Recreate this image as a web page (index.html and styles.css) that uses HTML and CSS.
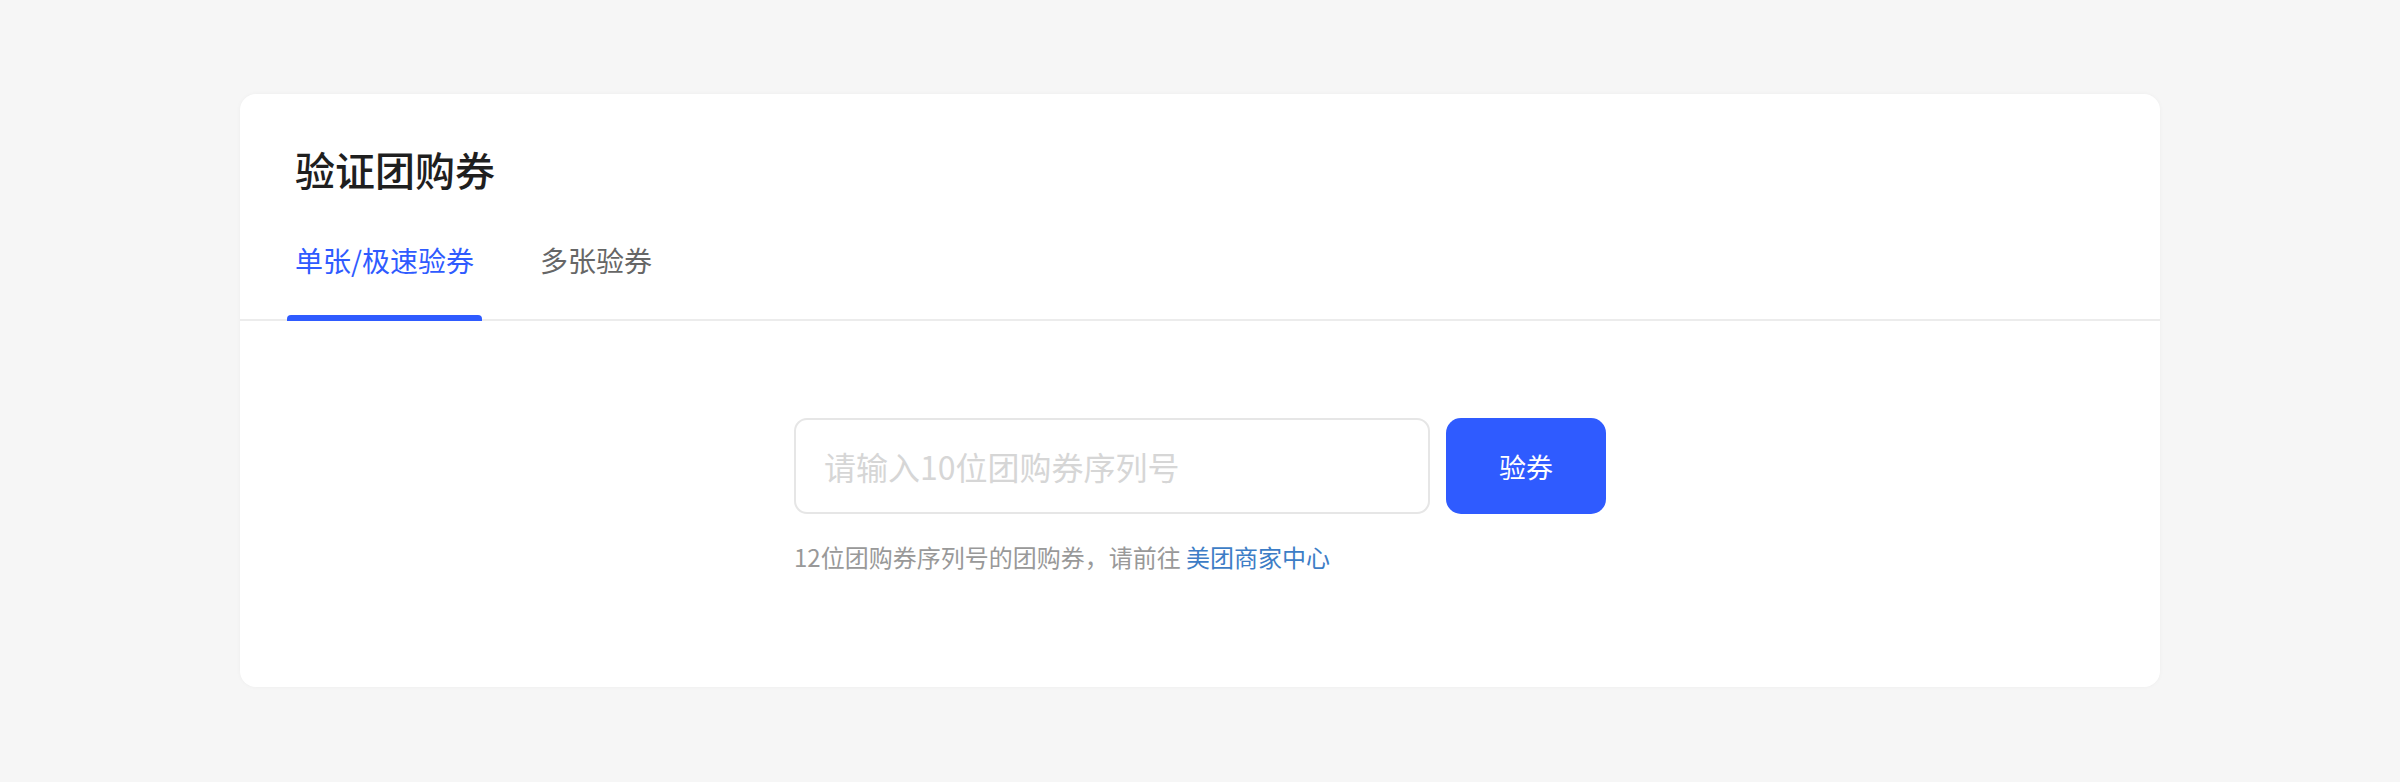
FILE: index.html
```html
<!DOCTYPE html>
<html lang="zh-CN">

<head>
    <meta charset="UTF-8">
    <meta name="viewport" content="width=device-width, initial-scale=1.0">
    <title>验证团购券</title>
    <link rel="stylesheet" href="styles.css">
</head>

<body>
    <div class="card">
        <div class="card-head">
            <h1 class="title">验证团购券</h1>
            <div class="tabs">
                <div class="tab active">单张/极速验券</div>
                <div class="tab">多张验券</div>
            </div>
        </div>
        <div class="card-body">
            <div class="verify">
                <div class="verify-row">
                    <input type="text" class="code-input" placeholder="请输入10位团购券序列号">
                    <button class="verify-btn">验券</button>
                </div>
                <p class="tip">12位团购券序列号的团购券，请前往 <a href="#" class="tip-link">美团商家中心</a></p>
            </div>
        </div>
    </div>
</body>

</html>
```

FILE: styles.css
```css
body {
    margin: 0;
    padding: 94px 0 95px;
    background-color: #f6f6f6;
    font-family: "Noto Sans CJK SC", "Noto Sans", sans-serif;
}

.card {
    width: 1920px;
    margin: 0 auto;
    background-color: #fff;
    border-radius: 16px;
    box-shadow: 0 0 4px rgba(0, 0, 0, 0.04);
}

.card-head {
    padding: 55px 47px 0;
    border-bottom: 2px solid #ececec;
}

.title {
    margin: 0 0 0 8px;
    font-size: 40px;
    line-height: 40px;
    font-weight: 500;
    color: #1f1f1f;
}

.tabs {
    display: flex;
    gap: 50px;
    margin-top: 57px;
}

.tab {
    position: relative;
    padding: 0 8px 45px;
    font-size: 28px;
    line-height: 28px;
    color: #666;
    cursor: pointer;
}

.tab.active {
    color: #2f5bff;
}

/* 选中标签下方的蓝条，压在分割线上 */
.tab.active::after {
    content: "";
    position: absolute;
    left: 0;
    right: 0;
    bottom: -2px;
    height: 6px;
    border-radius: 4px 4px 0 0;
    background-color: #2f5bff;
}

.card-body {
    padding: 97px 0 118px;
}

.verify {
    width: 812px;
    margin: 0 auto;
}

.verify-row {
    display: flex;
    gap: 16px;
}

.code-input {
    flex: 1;
    height: 96px;
    box-sizing: border-box;
    padding: 0 28px;
    border: 2px solid #e6e6e6;
    border-radius: 13px;
    font-family: inherit;
    font-size: 32px;
    color: #333;
    outline: none;
}

.code-input::placeholder {
    color: #d6d6d6;
}

.verify-btn {
    width: 160px;
    height: 96px;
    border: none;
    border-radius: 15px;
    background-color: #2f5bff;
    color: #fff;
    font-family: inherit;
    font-size: 27px;
    cursor: pointer;
}

.tip {
    margin: 31px 0 0;
    font-size: 24px;
    line-height: 24px;
    color: #999;
}

.tip-link {
    color: #3d7dc6;
    text-decoration: none;
}
```
